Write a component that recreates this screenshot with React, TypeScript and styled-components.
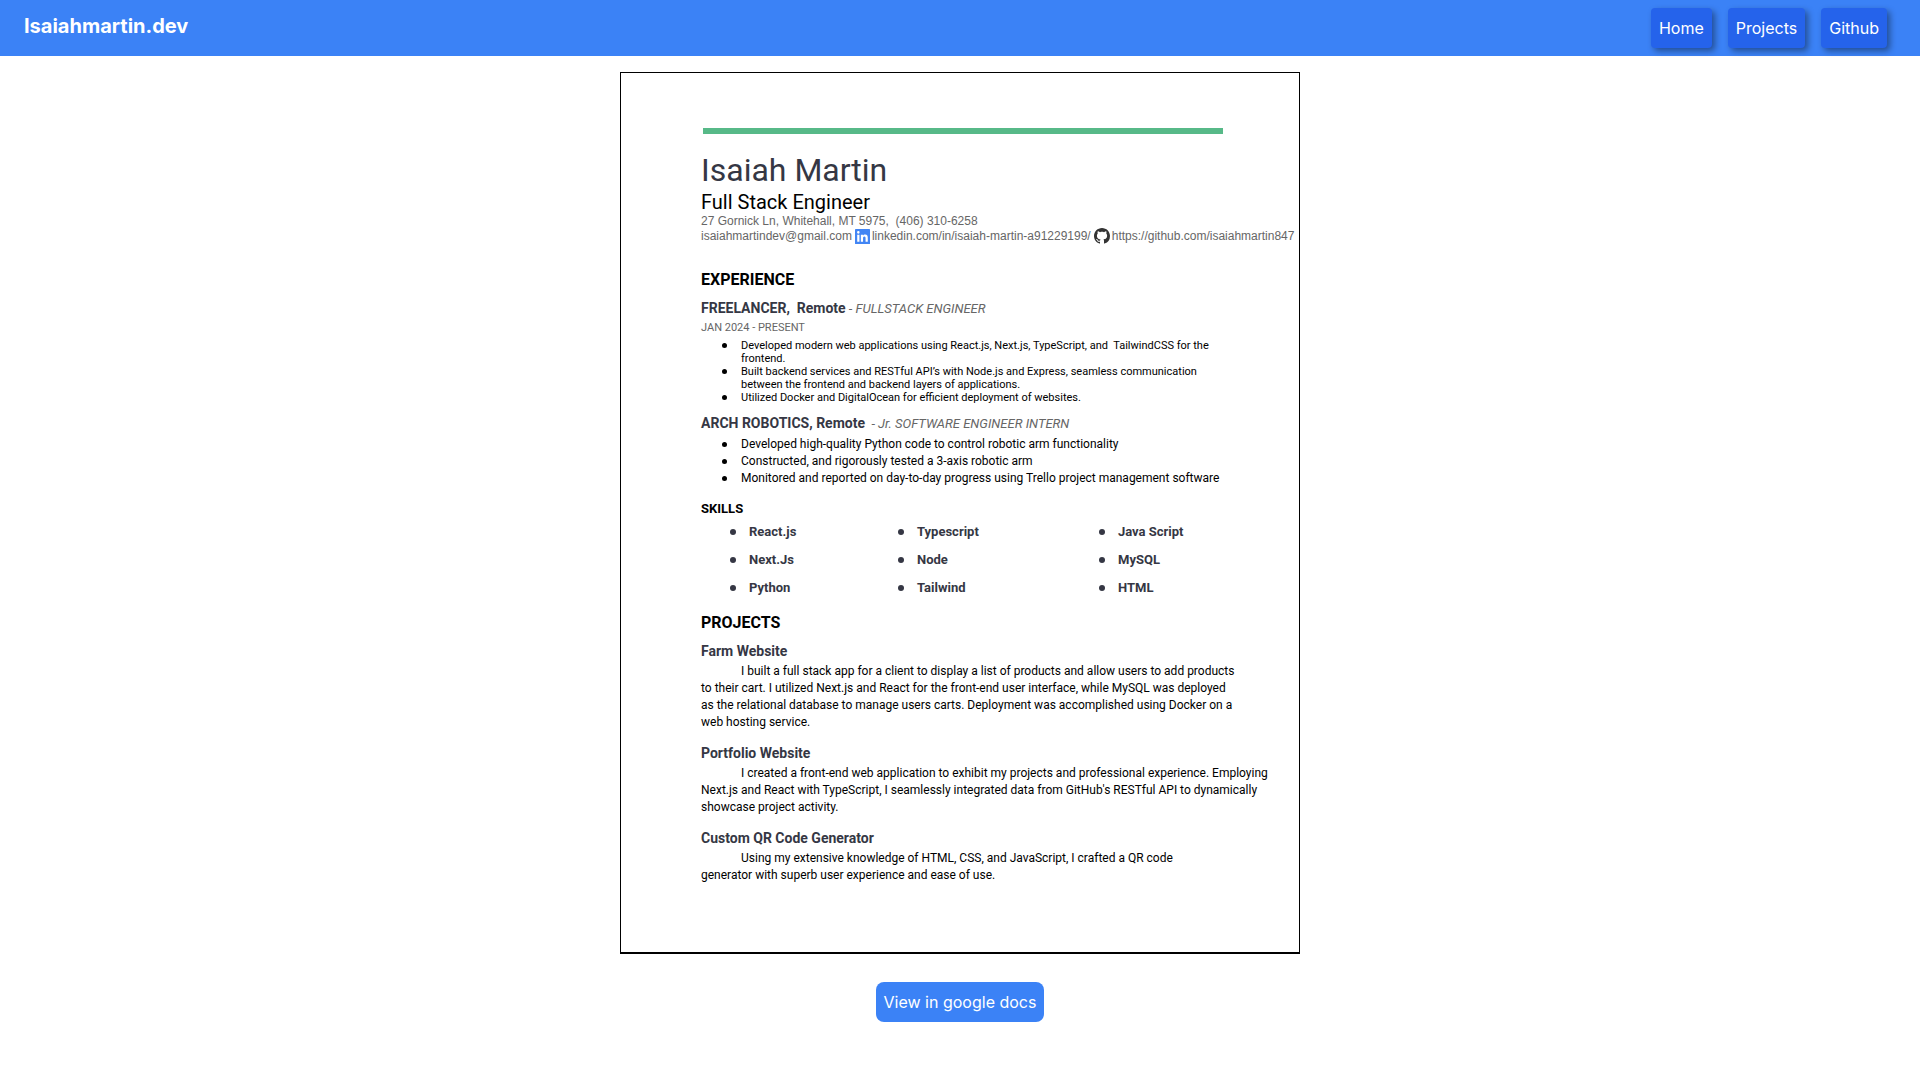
import React from "react";
import styled, { createGlobalStyle } from "styled-components";

const GlobalStyle = createGlobalStyle`
  *, *::before, *::after { box-sizing: border-box; }
  body {
    margin: 0;
    background: #fff;
    color: #000;
    font-family: Inter, "Liberation Sans", sans-serif;
  }
  h1, h2, h3, h4, p, ul { margin: 0; padding: 0; }
  ul { list-style: none; }
  a { color: inherit; text-decoration: none; }
`;

const Header = styled.header`
  display: flex;
  justify-content: space-between;
  align-items: flex-start;
  padding: 8px 33px 8px 24px;
  background: #3b82f6;
  color: #fff;
`;

const Brand = styled.h1`
  padding-top: 4px;
  font-size: 20px;
  font-weight: 700;
  line-height: 28px;
`;

const Nav = styled.nav`
  display: flex;
  gap: 16px;
`;

const NavLink = styled.a`
  padding: 8px;
  border-radius: 4px;
  background: #2563eb;
  box-shadow: 3px 3px 6px rgba(0, 0, 0, 0.4);
  font-size: 16px;
  line-height: 24px;
`;

const Main = styled.main`
  display: flex;
  flex-direction: column;
  align-items: center;
  gap: 28px;
  padding: 16px 0 56px;
`;

const Sheet = styled.article`
  width: 100%;
  max-width: 680px;
  padding: 55px 0 68px 80px;
  border: 1px solid #000;
  border-bottom-width: 2px;
  font-family: Roboto, "Liberation Sans", sans-serif;
`;

const Accent = styled.div`
  height: 6px;
  max-width: 520px;
  margin: 0 0 17px 2px;
  background: #57b988;
`;

const Name = styled.h2`
  color: #353744;
  font-size: 32px;
  font-weight: 400;
  line-height: 39px;
`;

const Role = styled.p`
  font-size: 20px;
  line-height: 24px;
`;

const Contact = styled.address`
  color: #666;
  font-family: "Liberation Sans", sans-serif;
  font-size: 12px;
  font-style: normal;
  line-height: 14px;
  white-space: pre;
`;

const ContactRow = styled.div`
  display: flex;
  align-items: center;
  gap: 3px;
  line-height: 16px;
`;

const IconLink = styled.a`
  display: flex;
  align-items: center;
  gap: 2px;
`;

const SectionTitle = styled.h3<{ $gap: number }>`
  margin-top: ${(p) => p.$gap}px;
  font-size: 16px;
  font-weight: 700;
  line-height: 20px;
`;

const SkillsTitle = styled(SectionTitle)`
  font-size: 13px;
  line-height: 18px;
`;

const EntryTitle = styled.h4<{ $gap: number }>`
  margin-top: ${(p) => p.$gap}px;
  color: #353744;
  font-size: 14px;
  font-weight: 700;
  line-height: 18px;
  white-space: pre;
`;

const Position = styled.em`
  color: #666;
  font-size: 13px;
  font-weight: 400;
`;

const Dates = styled.p`
  margin-top: 3px;
  color: #666;
  font-size: 11px;
  line-height: 14px;
`;

const Bullets = styled.ul<{ $compact?: boolean }>`
  margin-top: ${(p) => (p.$compact ? 4 : 3)}px;
  font-size: ${(p) => (p.$compact ? 11 : 12)}px;
  line-height: ${(p) => (p.$compact ? 13 : 17)}px;
`;

const Bullet = styled.li<{ $compact?: boolean }>`
  display: flex;
  white-space: pre;

  &::before {
    content: "";
    flex: none;
    width: 5px;
    height: 5px;
    margin: ${(p) => (p.$compact ? 4 : 6)}px 14px 0 21px;
    border-radius: 50%;
    background: #000;
  }
`;

const Skills = styled.ul`
  display: grid;
  grid-template-columns: 168px 201px auto;
  color: #353744;
  font-size: 13px;
  font-weight: 700;
  line-height: 28px;
`;

const Skill = styled.li`
  display: flex;
  align-items: center;

  &::before {
    content: "";
    width: 6px;
    height: 6px;
    margin: 0 13px 0 29px;
    border-radius: 50%;
    background: currentColor;
  }
`;

const Summary = styled.p`
  margin-top: 3px;
  font-size: 12px;
  line-height: 17px;
`;

const SummaryLine = styled.span`
  display: block;
  white-space: nowrap;

  &:first-child {
    padding-left: 40px;
  }
`;

const DocsLink = styled.a`
  padding: 8px;
  border-radius: 8px;
  background: #3b82f6;
  color: #fff;
  font-size: 16px;
  line-height: 24px;
`;

function LinkedInIcon() {
  return (
    <svg width="15" height="15" viewBox="0 0 24 24" aria-hidden="true">
      <rect width="24" height="24" rx="1" fill="#4285f4" />
      <path
        fill="#fff"
        d="M20.447 20.452h-3.554v-5.569c0-1.328-.027-3.037-1.852-3.037-1.853 0-2.136 1.445-2.136 2.939v5.667H9.351V9h3.414v1.561h.046c.477-.9 1.637-1.85 3.37-1.85 3.601 0 4.267 2.37 4.267 5.455v6.286zM5.337 7.433a2.062 2.062 0 0 1-2.063-2.065 2.064 2.064 0 1 1 2.063 2.065zm1.782 13.019H3.555V9h3.564v11.452z"
      />
    </svg>
  );
}

function GithubIcon() {
  return (
    <svg width="16" height="16" viewBox="0 0 16 16" aria-hidden="true">
      <path
        fill="#333"
        d="M8 0C3.58 0 0 3.58 0 8c0 3.54 2.29 6.53 5.47 7.59.4.07.55-.17.55-.38 0-.19-.01-.82-.01-1.49-2.01.37-2.53-.49-2.69-.94-.09-.23-.48-.94-.82-1.13-.28-.15-.68-.52-.01-.53.63-.01 1.08.58 1.23.82.72 1.21 1.87.87 2.33.66.07-.52.28-.87.51-1.07-1.78-.2-3.64-.89-3.64-3.95 0-.87.31-1.59.82-2.15-.08-.2-.36-1.02.08-2.12 0 0 .67-.21 2.2.82.64-.18 1.32-.27 2-.27s1.36.09 2 .27c1.53-1.04 2.2-.82 2.2-.82.44 1.1.16 1.92.08 2.12.51.56.82 1.27.82 2.15 0 3.07-1.87 3.75-3.65 3.95.29.25.54.73.54 1.48 0 1.07-.01 1.93-.01 2.2 0 .21.15.46.55.38A8.01 8.01 0 0 0 16 8c0-4.42-3.58-8-8-8z"
      />
    </svg>
  );
}

const freelanceWork = [
  "Developed modern web applications using React.js, Next.js, TypeScript, and  TailwindCSS for the\nfrontend.",
  "Built backend services and RESTful API’s with Node.js and Express, seamless communication\nbetween the frontend and backend layers of applications.",
  "Utilized Docker and DigitalOcean for efficient deployment of websites.",
];

const internWork = [
  "Developed high-quality Python code to control robotic arm functionality",
  "Constructed, and rigorously tested a 3-axis robotic arm",
  "Monitored and reported on day-to-day progress using Trello project management software",
];

const skills = [
  "React.js", "Typescript", "Java Script",
  "Next.Js", "Node", "MySQL",
  "Python", "Tailwind", "HTML",
];

const projects = [
  {
    title: "Farm Website",
    lines: [
      "I built a full stack app for a client to display a list of products and allow users to add products",
      "to their cart. I utilized Next.js and React for the front-end user interface, while MySQL was deployed",
      "as the relational database to manage users carts. Deployment was accomplished using Docker on a",
      "web hosting service.",
    ],
  },
  {
    title: "Portfolio Website",
    lines: [
      "I created a front-end web application to exhibit my projects and professional experience. Employing",
      "Next.js and React with TypeScript, I seamlessly integrated data from GitHub's RESTful API to dynamically",
      "showcase project activity.",
    ],
  },
  {
    title: "Custom QR Code Generator",
    lines: [
      "Using my extensive knowledge of HTML, CSS, and JavaScript, I crafted a QR code",
      "generator with superb user experience and ease of use.",
    ],
  },
];

export default function App() {
  return (
    <>
      <GlobalStyle />
      <Header>
        <Brand>Isaiahmartin.dev</Brand>
        <Nav>
          <NavLink href="#home">Home</NavLink>
          <NavLink href="#projects">Projects</NavLink>
          <NavLink href="#github">Github</NavLink>
        </Nav>
      </Header>
      <Main>
        <Sheet>
          <Accent />
          <Name>Isaiah Martin</Name>
          <Role>Full Stack Engineer</Role>
          <Contact>
            {"27 Gornick Ln, Whitehall, MT 5975,  (406) 310-6258"}
            <ContactRow>
              <a href="mailto:isaiahmartindev@gmail.com">isaiahmartindev@gmail.com</a>
              <IconLink href="#linkedin">
                <LinkedInIcon />
                linkedin.com/in/isaiah-martin-a91229199/
              </IconLink>
              <IconLink href="#github">
                <GithubIcon />
                https://github.com/isaiahmartin847
              </IconLink>
            </ContactRow>
          </Contact>

          <SectionTitle $gap={26}>EXPERIENCE</SectionTitle>
          <EntryTitle $gap={9}>
            {"FREELANCER,  Remote"}
            <Position>{" - FULLSTACK ENGINEER"}</Position>
          </EntryTitle>
          <Dates>JAN 2024 - PRESENT</Dates>
          <Bullets $compact>
            {freelanceWork.map((item) => (
              <Bullet key={item} $compact>{item}</Bullet>
            ))}
          </Bullets>
          <EntryTitle $gap={10}>
            {"ARCH ROBOTICS, Remote"}
            <Position>{"  - Jr. SOFTWARE ENGINEER INTERN"}</Position>
          </EntryTitle>
          <Bullets>
            {internWork.map((item) => (
              <Bullet key={item}>{item}</Bullet>
            ))}
          </Bullets>

          <SkillsTitle $gap={13}>SKILLS</SkillsTitle>
          <Skills>
            {skills.map((skill) => (
              <Skill key={skill}>{skill}</Skill>
            ))}
          </Skills>

          <SectionTitle $gap={11}>PROJECTS</SectionTitle>
          {projects.map((project, index) => (
            <section key={project.title}>
              <EntryTitle $gap={index === 0 ? 9 : 13}>{project.title}</EntryTitle>
              <Summary>
                {project.lines.map((line) => (
                  <SummaryLine key={line}>{line}</SummaryLine>
                ))}
              </Summary>
            </section>
          ))}
        </Sheet>
        <DocsLink href="#docs">View in google docs</DocsLink>
      </Main>
    </>
  );
}
